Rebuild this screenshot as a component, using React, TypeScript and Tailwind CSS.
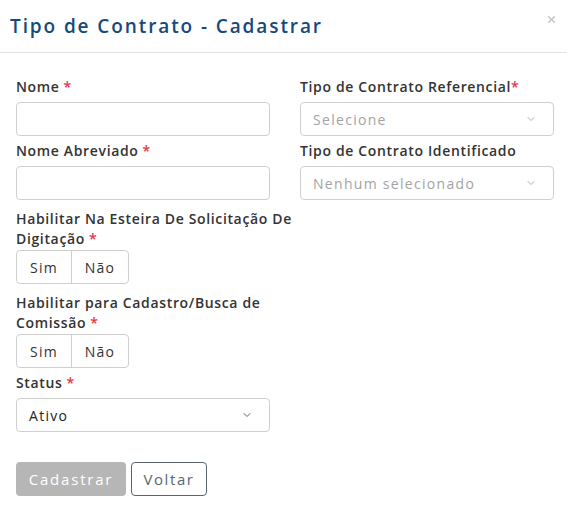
import { ChevronDown, X } from 'lucide-react';

const font = { fontFamily: '"Open Sans", "Noto Sans", sans-serif' };

function Label({ text, required = true, tight = false }: { text: string; required?: boolean; tight?: boolean }) {
  return (
    <label className="block text-[14px] leading-[20px] font-semibold text-[#333333] tracking-[0.65px]">
      {text}
      {required && <span className={`text-[#e8334a] ${tight ? '' : 'ml-1'}`}>*</span>}
    </label>
  );
}

function Select({ value, placeholder = false }: { value: string; placeholder?: boolean }) {
  return (
    <div className="mt-[5px] h-[34px] border border-[#cfcfcf] rounded-[4px] flex items-center justify-between pl-[12px] pr-[16px] bg-white">
      <span className={`text-[14px] tracking-[1.3px] ${placeholder ? 'text-[#a3a3a3]' : 'text-[#222222]'}`}>{value}</span>
      <ChevronDown size={12} strokeWidth={1.6} className={placeholder ? 'text-[#9a9a9a]' : 'text-[#333333]'} />
    </div>
  );
}

function Toggle() {
  return (
    <div className="mt-[1px] inline-flex h-[34px] border border-[#cfcfcf] rounded-[4px] text-[14px] text-[#333333] tracking-[1.3px]">
      <div className="w-[55px] flex items-center justify-center border-r border-[#cfcfcf]">Sim</div>
      <div className="w-[56px] flex items-center justify-center">Não</div>
    </div>
  );
}

export default function App() {
  return (
    <div className="w-[567px] h-[510px] bg-white" style={font}>
      <div className="h-[53px] border-b border-[#e3e3e3] flex items-center justify-between pl-[10px] pr-[10px]">
        <h1 className="text-[19px] font-semibold text-[#154a7c] tracking-[1.9px]">Tipo de Contrato - Cadastrar</h1>
        <X size={11} strokeWidth={3} className="text-[#c4c4c4] -mt-[14px]" />
      </div>

      <div className="grid grid-cols-2 gap-x-[30px] pl-[16px] pr-[13px] pt-[24px]">
        <div className="flex flex-col">
          <Label text="Nome" />
          <div className="mt-[5px] h-[34px] border border-[#cfcfcf] rounded-[4px]" />
          <div className="mt-[5px]">
            <Label text="Nome Abreviado" />
          </div>
          <div className="mt-[5px] h-[34px] border border-[#cfcfcf] rounded-[4px]" />
          <div className="mt-[9px] w-[292px]">
            <Label text="Habilitar Na Esteira De Solicitação De Digitação" />
          </div>
          <div>
            <Toggle />
          </div>
          <div className="mt-[9px]">
            <Label text="Habilitar para Cadastro/Busca de Comissão" />
          </div>
          <div>
            <Toggle />
          </div>
          <div className="mt-[5px]">
            <Label text="Status" />
          </div>
          <Select value="Ativo" />
          <div className="mt-[30px] flex gap-[5px]">
            <button className="h-[34px] w-[110px] rounded-[4px] bg-[#b6b6b6] text-white text-[15px] font-medium tracking-[1.8px]">
              Cadastrar
            </button>
            <button className="h-[34px] w-[76px] rounded-[4px] border border-[#5c6472] text-[#5c6472] text-[15px] tracking-[1.6px] bg-white">
              Voltar
            </button>
          </div>
        </div>
        <div className="flex flex-col">
          <Label text="Tipo de Contrato Referencial" tight />
          <Select value="Selecione" placeholder />
          <div className="mt-[5px]">
            <Label text="Tipo de Contrato Identificado" required={false} />
          </div>
          <Select value="Nenhum selecionado" placeholder />
        </div>
      </div>
    </div>
  );
}
